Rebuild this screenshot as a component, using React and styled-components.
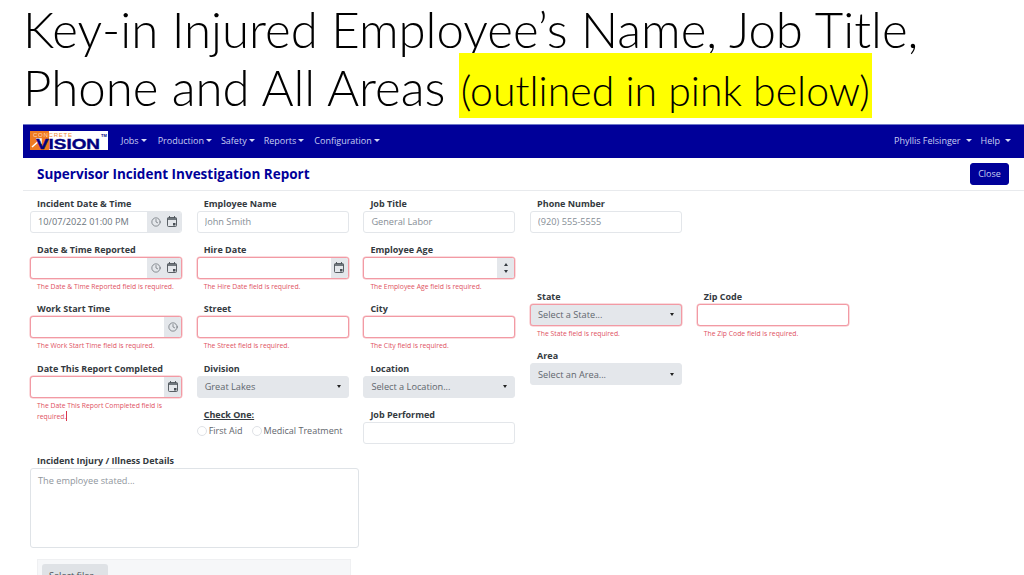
import styled, { createGlobalStyle } from "styled-components";
import { Clock } from "lucide-react";

const Global = createGlobalStyle`
  html, body { margin: 0; padding: 0; background: #fff; height: 575px; overflow: hidden; }
  body { font-family: "Open Sans", "Noto Sans", sans-serif; }
`;

const Heading = styled.h1`
  margin: 0;
  height: 124px;
  box-sizing: border-box;
  padding: 0 0 0 23px;
  font: 300 49.2px/58px Lato, "Open Sans", sans-serif;
  color: #000;
  white-space: nowrap;
`;

const Highlight = styled.span`
  display: inline-block;
  background: #ffff00;
  font-size: 41px;
  line-height: 75px;
  height: 65px;
  margin-top: -6px;
  padding: 0 2px;
`;

const Shell = styled.div`
  margin-left: 23px;
  height: 451px;
  overflow: hidden;
`;

const NavBar = styled.nav`
  height: 34px;
  background: #000099;
  border-top: 1px solid #6f78c8;
  box-sizing: border-box;
  display: flex;
  align-items: center;
  padding: 0 13px 3px 7px;
  color: #c9cff2;
  font-size: 9px;
`;

const NavItem = styled.span`
  display: inline-flex;
  align-items: center;
  white-space: nowrap;
  margin-left: ${(p) => p.$left || 0}px;
  &::after {
    content: "";
    margin-left: ${(p) => p.$caretGap || 2}px;
    border-top: 3px solid #d8dcf5;
    border-left: 3px solid transparent;
    border-right: 3px solid transparent;
  }
`;

const NavRight = styled.div`
  margin-left: auto;
  display: flex;
`;

const TitleBar = styled.div`
  height: 33px;
  box-sizing: border-box;
  display: flex;
  align-items: center;
  justify-content: space-between;
  padding: 0 15px 1px 14px;
  border-bottom: 1px solid #e8eaed;
`;

const Title = styled.h2`
  margin: 0;
  font-size: 13.5px;
  font-weight: 700;
  color: #000099;
`;

const CloseButton = styled.button`
  width: 39px;
  height: 22px;
  padding: 0;
  border: 1px solid #000099;
  border-radius: 3px;
  background: #000099;
  color: #c9cff2;
  font: 9px "Open Sans", sans-serif;
`;

const Columns = styled.div`
  display: flex;
  gap: 14.7px;
  padding: 4.5px 0 0 7px;
  align-items: flex-start;
`;

const Column = styled.div`
  width: 152px;
  display: flex;
  flex-direction: column;
  gap: 9px;
`;

const Field = styled.div`
  margin-top: ${(p) => p.$offset || 0}px;
`;

const Label = styled.label`
  display: block;
  height: 15px;
  padding-left: 7px;
  font-size: 9px;
  line-height: 15px;
  font-weight: 700;
  color: #343a40;
  white-space: nowrap;
  text-decoration: ${(p) => (p.$underline ? "underline" : "none")};
`;

const InputBox = styled.div`
  display: flex;
  height: 22px;
  box-sizing: border-box;
  overflow: hidden;
  border-radius: 3px;
  border: 1px solid ${(p) => (p.$invalid ? "#f29aa4" : "#e3e6ea")};
  box-shadow: ${(p) => (p.$invalid ? "0 0 0 0.5px #f7b8be" : "none")};
  background: #fff;
`;

const TextInput = styled.input`
  flex: 1;
  min-width: 0;
  border: 0;
  outline: 0;
  padding: 0 0 0 7px;
  background: transparent;
  font: 9.2px "Open Sans", sans-serif;
  color: #6c757d;
  &::placeholder { color: #868e96; opacity: 1; }
`;

const Addon = styled.span`
  flex: none;
  display: flex;
  align-items: center;
  justify-content: center;
  gap: 6px;
  width: ${(p) => (p.$double ? 34 : 17)}px;
  background: #e4e7eb;
  color: #495057;
`;

const Spinner = styled(Addon)`
  flex-direction: column;
  gap: 4px;
`;

const Arrow = styled.i`
  width: 0;
  height: 0;
  border-left: 2.5px solid transparent;
  border-right: 2.5px solid transparent;
  border-${(p) => (p.$up ? "bottom" : "top")}: 3.5px solid #343a40;
`;

const SelectBox = styled(InputBox)`
  align-items: center;
  justify-content: space-between;
  padding: 0 7px 0 7px;
  background: #e4e7eb;
  border-color: ${(p) => (p.$invalid ? "#f29aa4" : "#e4e7eb")};
  font-size: 9.2px;
  color: #5f666d;
  &::after {
    content: "";
    border-top: 3.5px solid #222;
    border-left: 2.5px solid transparent;
    border-right: 2.5px solid transparent;
  }
`;

const ErrorText = styled.div`
  padding: 3px 0 0 7px;
  min-height: 10.5px;
  font-size: 6.8px;
  line-height: 10.5px;
  color: #e0525f;
`;

const Caret = styled.span`
  display: inline-block;
  width: 1px;
  height: 10px;
  vertical-align: -2px;
  background: #d9364a;
`;

const RadioRow = styled.div`
  display: flex;
  align-items: center;
  height: 16px;
  margin-top: 1px;
  font-size: 9px;
  color: #5f666d;
  white-space: nowrap;
`;

const RadioCircle = styled.span`
  flex: none;
  width: 8px;
  height: 8px;
  border: 1px solid #dfe2e6;
  border-radius: 50%;
  margin: 0 2px 0 ${(p) => p.$left || 0}px;
`;

const Details = styled.div`
  width: 329px;
  margin: 9px 0 0 7px;
`;

const TextArea = styled.textarea`
  display: block;
  width: 100%;
  height: 80px;
  box-sizing: border-box;
  border: 1px solid #dfe3e7;
  border-radius: 3px;
  padding: 5px 7px;
  resize: none;
  outline: 0;
  font: 9.2px "Open Sans", sans-serif;
  &::placeholder { color: #8f969d; opacity: 1; }
`;

const UploadBox = styled.div`
  width: 314px;
  margin: 11.5px 0 0 7px;
  padding: 4px;
  box-sizing: border-box;
  background: #f6f7f9;
  border: 1px solid #eff0f2;
`;

const UploadButton = styled.button`
  display: block;
  width: 66px;
  height: 22px;
  padding: 0;
  border: 0;
  border-radius: 3px;
  background: #dfe2e6;
  color: #495057;
  font: 9.2px "Open Sans", sans-serif;
`;

const CalendarIcon = () => (
  <svg width="10" height="11" viewBox="0 0 10 11" fill="none" stroke="currentColor" strokeWidth="0.9">
    <rect x="0.5" y="1.5" width="9" height="9" rx="1" />
    <path d="M0.5 3h9" strokeWidth="1.6" />
    <path d="M2.5 0v2M7.5 0v2" />
    <rect x="6" y="7" width="2.5" height="2.5" fill="currentColor" stroke="none" />
  </svg>
);

const ClockIcon = () => <Clock size={10} strokeWidth={1.4} />;

const Logo = () => (
  <svg width="78" height="19" viewBox="0 0 78 19" style={{ flex: "none", overflow: "visible" }}>
    <rect width="78" height="19" fill="#fff" />
    <rect width="19" height="19" fill="#ee7a22" />
    <path d="M2 16 L11 8 M6 8 h5 v5" stroke="#fff" strokeWidth="1.5" fill="none" />
    <text x="3" y="5.5" fontFamily="Liberation Sans" fontSize="6" fill="#f08a3a" textLength="39">
      <tspan fill="#ffd9b8">CON</tspan>CRETE
    </text>
    <text x="6" y="18" fontFamily="Liberation Sans" fontWeight="700" fontSize="15.5" fill="#000080" stroke="#000080" strokeWidth="0.4" textLength="64" lengthAdjust="spacingAndGlyphs">VISION</text>
    <text x="71" y="6" fontFamily="Liberation Sans" fontWeight="700" fontSize="4" fill="#000080">TM</text>
  </svg>
);

const required = (name) => `The ${name} field is required.`;

export default function App() {
  return (
    <>
      <Global />
      <Heading>
        Key-in Injured Employee’s Name, Job Title,
        <br />
        Phone and All Areas <Highlight>(outlined in pink below)</Highlight>
      </Heading>
      <Shell>
        <NavBar>
          <Logo />
          <NavItem $left={13}>Jobs</NavItem>
          <NavItem $left={11}>Production</NavItem>
          <NavItem $left={9}>Safety</NavItem>
          <NavItem $left={9}>Reports</NavItem>
          <NavItem $left={10}>Configuration</NavItem>
          <NavRight>
            <NavItem $caretGap={5}>Phyllis Felsinger</NavItem>
            <NavItem $left={9} $caretGap={5}>Help</NavItem>
          </NavRight>
        </NavBar>
        <TitleBar>
          <Title>Supervisor Incident Investigation Report</Title>
          <CloseButton>Close</CloseButton>
        </TitleBar>
        <Columns>
          <Column>
            <Field>
              <Label>Incident Date &amp; Time</Label>
              <InputBox>
                <TextInput readOnly value="10/07/2022 01:00 PM" />
                <Addon $double><ClockIcon /><CalendarIcon /></Addon>
              </InputBox>
            </Field>
            <Field>
              <Label>Date &amp; Time Reported</Label>
              <InputBox $invalid>
                <TextInput />
                <Addon $double><ClockIcon /><CalendarIcon /></Addon>
              </InputBox>
              <ErrorText>{required("Date & Time Reported")}</ErrorText>
            </Field>
            <Field>
              <Label>Work Start Time</Label>
              <InputBox $invalid>
                <TextInput />
                <Addon><ClockIcon /></Addon>
              </InputBox>
              <ErrorText>{required("Work Start Time")}</ErrorText>
            </Field>
            <Field>
              <Label>Date This Report Completed</Label>
              <InputBox $invalid>
                <TextInput />
                <Addon><CalendarIcon /></Addon>
              </InputBox>
              <ErrorText>
                {required("Date This Report Completed")}
                <Caret />
              </ErrorText>
            </Field>
          </Column>
          <Column>
            <Field>
              <Label>Employee Name</Label>
              <InputBox><TextInput placeholder="John Smith" /></InputBox>
            </Field>
            <Field>
              <Label>Hire Date</Label>
              <InputBox $invalid>
                <TextInput />
                <Addon><CalendarIcon /></Addon>
              </InputBox>
              <ErrorText>{required("Hire Date")}</ErrorText>
            </Field>
            <Field>
              <Label>Street</Label>
              <InputBox $invalid><TextInput /></InputBox>
              <ErrorText>{required("Street")}</ErrorText>
            </Field>
            <Field>
              <Label>Division</Label>
              <SelectBox>Great Lakes</SelectBox>
            </Field>
            <Field>
              <Label $underline>Check One:</Label>
              <RadioRow>
                <RadioCircle />First Aid
                <RadioCircle $left={9} />Medical Treatment
              </RadioRow>
            </Field>
          </Column>
          <Column>
            <Field>
              <Label>Job Title</Label>
              <InputBox><TextInput placeholder="General Labor" /></InputBox>
            </Field>
            <Field>
              <Label>Employee Age</Label>
              <InputBox $invalid>
                <TextInput />
                <Spinner><Arrow $up /><Arrow /></Spinner>
              </InputBox>
              <ErrorText>{required("Employee Age")}</ErrorText>
            </Field>
            <Field>
              <Label>City</Label>
              <InputBox $invalid><TextInput /></InputBox>
              <ErrorText>{required("City")}</ErrorText>
            </Field>
            <Field>
              <Label>Location</Label>
              <SelectBox>Select a Location...</SelectBox>
            </Field>
            <Field>
              <Label>Job Performed</Label>
              <InputBox><TextInput /></InputBox>
            </Field>
          </Column>
          <Column>
            <Field>
              <Label>Phone Number</Label>
              <InputBox><TextInput placeholder="(920) 555-5555" /></InputBox>
            </Field>
            <Field $offset={47}>
              <Label>State</Label>
              <SelectBox $invalid>Select a State...</SelectBox>
              <ErrorText>{required("State")}</ErrorText>
            </Field>
            <Field>
              <Label>Area</Label>
              <SelectBox>Select an Area...</SelectBox>
            </Field>
          </Column>
          <Column>
            <Field $offset={93}>
              <Label>Zip Code</Label>
              <InputBox $invalid><TextInput /></InputBox>
              <ErrorText>{required("Zip Code")}</ErrorText>
            </Field>
          </Column>
        </Columns>
        <Details>
          <Label>Incident Injury / Illness Details</Label>
          <TextArea placeholder="The employee stated..." />
          <UploadBox>
            <UploadButton>Select files...</UploadButton>
          </UploadBox>
        </Details>
      </Shell>
    </>
  );
}
